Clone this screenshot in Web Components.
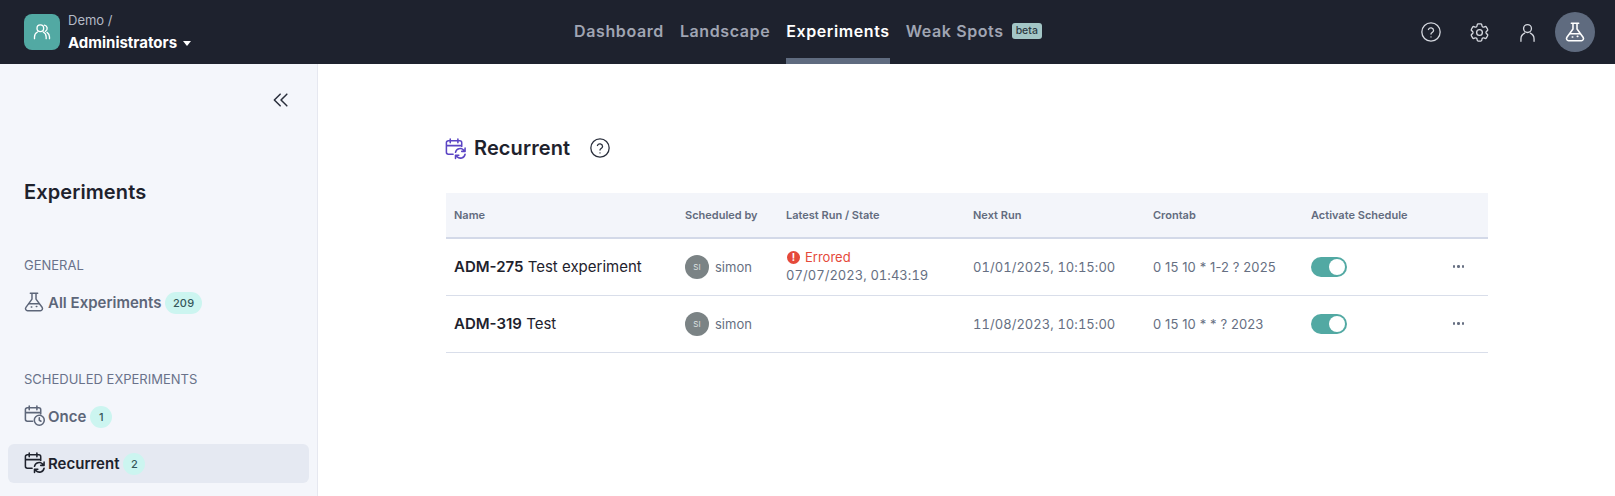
<!DOCTYPE html>
<html>
<head>
<meta charset="utf-8">
<title>Recurrent</title>
<style>
  html, body { margin: 0; height: 100%; background: #fff; }
  body { font-family: Inter, "Liberation Sans", sans-serif; color: #1e222d; overflow: hidden; }
</style>
</head>
<body>
<app-shell>
  <app-header slot="header"></app-header>
  <side-bar slot="side">
    <side-section label="General">
      <side-item icon="flask" count="209">All Experiments</side-item>
    </side-section>
    <side-section label="Scheduled Experiments">
      <side-item icon="once" count="1">Once</side-item>
      <side-item icon="recur" count="2" active>Recurrent</side-item>
    </side-section>
  </side-bar>
  <recurrent-page>
    <exp-table>
      <exp-row code="ADM-275" name="Test experiment" user="simon" errored="07/07/2023, 01:43:19" next="01/01/2025, 10:15:00" cron="0 15 10 * 1-2 ? 2025"></exp-row>
      <exp-row code="ADM-319" name="Test" user="simon" next="11/08/2023, 10:15:00" cron="0 15 10 * * ? 2023"></exp-row>
    </exp-table>
  </recurrent-page>
</app-shell>

<script>
const ICONS = {
  flask: '<path d="M8 2.500h8M9.800 2.500v6.300L3.200 17.800A2.300 2.300 0 0 0 5 21.500h14a2.300 2.300 0 0 0 1.800-3.700L14.200 8.800V2.500"/><path d="M6.300 14h11.400"/><path d="M9 17.500h.6M14.500 16.800h.6"/>',
  once: '<path d="M10 18H4.500a2 2 0 0 1-2-2V6a2 2 0 0 1 2-2h12a2 2 0 0 1 2 2v4.500M2.500 9h16M6.500 2v4M14.500 2v4"/><circle cx="17" cy="17" r="5.200"/><path d="M17 14.300V17l1.800 1"/>',
  recur: '<path d="M9.500 18h-5a2 2 0 0 1-2-2V6a2 2 0 0 1 2-2h12a2 2 0 0 1 2 2v4M2.500 9h16M6.500 2v4M14.500 2v4"/><path d="M12 16a5 5 0 0 1 8.500-2.500l1.500 1.500M22 11.500V15h-3.500M22 18a5 5 0 0 1-8.500 2.500L12 19M12 22.500V19h3.500"/>',
  help: '<circle cx="12" cy="12" r="10"/><path d="M9.200 9.300a2.900 2.900 0 0 1 5.600 1c0 1.900-2.800 2.400-2.800 3.900"/><path d="M12 17.300v.1"/>',
  gear: '<path d="M9.594 3.940c.09-.542.56-.94 1.110-.94h2.593c.55 0 1.020.398 1.110.94l.213 1.281c.063.374.313.686.645.87.074.04.147.083.22.127.325.196.72.257 1.075.124l1.217-.456a1.125 1.125 0 0 1 1.370.49l1.296 2.247a1.125 1.125 0 0 1-.26 1.431l-1.003.827c-.293.241-.438.613-.43.992a7.723 7.723 0 0 1 0 .255c-.008.378.137.75.43.991l1.004.827c.424.35.534.955.26 1.430l-1.298 2.247a1.125 1.125 0 0 1-1.369.491l-1.217-.456c-.355-.133-.75-.072-1.076.124a6.470 6.470 0 0 1-.22.128c-.331.183-.581.495-.644.869l-.213 1.281c-.09.543-.56.94-1.110.94h-2.594c-.55 0-1.019-.398-1.110-.94l-.213-1.281c-.062-.374-.312-.686-.644-.87a6.520 6.520 0 0 1-.22-.127c-.325-.196-.72-.257-1.076-.124l-1.217.456a1.125 1.125 0 0 1-1.369-.49l-1.297-2.247a1.125 1.125 0 0 1 .26-1.431l1.004-.827c.292-.24.437-.613.43-.991a6.932 6.932 0 0 1 0-.255c.007-.38-.138-.751-.43-.992l-1.004-.827a1.125 1.125 0 0 1-.26-1.430l1.297-2.247a1.125 1.125 0 0 1 1.370-.491l1.216.456c.356.133.751.072 1.076-.124.072-.044.146-.086.22-.128.332-.183.582-.495.644-.869l.214-1.280Z"/><circle cx="12" cy="12" r="3"/>',
  person: '<circle cx="12" cy="7.500" r="4.500"/><path d="M4.500 22v-2.500a7.500 7.500 0 0 1 4.200-6.800M19.500 22v-2.500a7.500 7.500 0 0 0-4.200-6.800"/>',
  group: '<circle cx="10" cy="7.500" r="4"/><path d="M3 20v-2a7 7 0 0 1 3.500-6M17 20v-2a7 7 0 0 0-3.500-6"/><path d="M15 3.700a4 4 0 0 1 1 7.500M21 20v-2a7 7 0 0 0-3-5.500"/>',
  collapse: '<path d="M11 5l-7 7 7 7M19 5l-7 7 7 7"/>'
};

function svg(name, size, stroke, width) {
  return `<svg xmlns="http://www.w3.org/2000/svg" width="${size}" height="${size}" viewBox="0 0 24 24" fill="none" stroke="${stroke}" stroke-width="${width}" stroke-linecap="round" stroke-linejoin="round">${ICONS[name]}</svg>`;
}

class AppShell extends HTMLElement {
  constructor(){
    super();
    this.attachShadow({ mode: 'open' });
  }
  connectedCallback() {
    this.shadowRoot.innerHTML = `
      <style>
        :host { display: grid; grid-template-rows: 64px 1fr; height: 496px; }
        .body { display: grid; grid-template-columns: 318px 1fr; min-height: 0; }
      </style>
      <slot name="header"></slot>
      <div class="body">
        <slot name="side"></slot>
        <slot></slot>
      </div>
    `;
  }
}

class AppHeader extends HTMLElement {
  constructor(){
    super();
    this.attachShadow({ mode: 'open' });
  }
  connectedCallback() {
    this.shadowRoot.innerHTML = `
      <style>
        :host {
          display: grid;
          grid-template-columns: 1fr auto 1fr;
          height: 64px;
          background: #1e222e;
          color: #fff;
          padding: 0 20px 0 24px;
          box-sizing: border-box;
        }
        .org { display: flex; align-items: center; gap: 8px; }
        .tile {
          width: 36px; height: 36px; border-radius: 8px; background: #52a9a3;
          display: flex; align-items: center; justify-content: center;
        }
        .org-text { display: flex; flex-direction: column; gap: 6px; }
        .demo { font-size: 13px; line-height: 16px; color: #b4bac6; }
        .admin { font-size: 15px; line-height: 18px; font-weight: 700; display: flex; align-items: center; gap: 6px; }
        .caret { width: 0; height: 0; border: 4.500px solid transparent; border-top: 5px solid #fff; border-bottom: 0; }
        nav { display: flex; gap: 16px; padding-right: 3px; }
        a {
          display: flex; align-items: center; gap: 8px;
          height: 64px; box-sizing: border-box; padding-top: 4px;
          font-size: 16px; font-weight: 600; color: #a0a5b3; letter-spacing: .6px;
          border-bottom: 6px solid transparent;
        }
        a.on { color: #fff; border-bottom-color: #5f6b7f; }
        .beta {
          font-size: 10.500px; line-height: 16px; font-weight: 500; padding: 0 4px;
          background: #a3c6c6; color: #2d3a42; border-radius: 3px; letter-spacing: 0;
        }
        .tools { display: flex; align-items: center; justify-content: flex-end; }
        .tool { width: 48px; display: flex; justify-content: center; }
        .avatar {
          width: 40px; height: 40px; border-radius: 50%; background: #5f6b7f; margin-left: 4px;
          display: flex; align-items: center; justify-content: center;
        }
      </style>
      <div class="org">
        <div class="tile">${svg('group', 20, '#fff', 1.6)}</div>
        <div class="org-text">
          <div class="demo">Demo /</div>
          <div class="admin">Administrators <span class="caret"></span></div>
        </div>
      </div>
      <nav>
        <a>Dashboard</a>
        <a>Landscape</a>
        <a class="on">Experiments</a>
        <a>Weak Spots <span class="beta">beta</span></a>
      </nav>
      <div class="tools">
        <div class="tool">${svg('help', 22, '#d5d8df', 1.4)}</div>
        <div class="tool">${svg('gear', 23, '#d5d8df', 1.4)}</div>
        <div class="tool">${svg('person', 21, '#d5d8df', 1.5)}</div>
        <div class="avatar">${svg('flask', 22, '#fff', 1.7)}</div>
      </div>
    `;
  }
}

class SideBar extends HTMLElement {
  constructor(){
    super();
    this.attachShadow({ mode: 'open' });
  }
  connectedCallback() {
    this.shadowRoot.innerHTML = `
      <style>
        :host {
          display: flex; flex-direction: column;
          background: #f4f6fb; border-right: 1px solid #e6e8f0;
          box-sizing: border-box; height: 432px; padding: 0 8px;
        }
        .collapse { display: flex; justify-content: flex-end; padding: 26px 18px 0 0; height: 23px; }
        h2 { font-size: 20px; line-height: 28px; font-weight: 600; letter-spacing: .1px; margin: 68px 0 51px 16px; color: #1e222d; }
      </style>
      <div class="collapse">${svg('collapse', 20, '#2a2f3c', 1.8)}</div>
      <h2>Experiments</h2>
      <slot></slot>
    `;
  }
}

class SideSection extends HTMLElement {
  constructor(){
    super();
    this.attachShadow({ mode: 'open' });
  }
  connectedCallback() {
    this.shadowRoot.innerHTML = `
      <style>
        :host { display: flex; flex-direction: column; gap: 8px; margin-bottom: 49px; }
        .label {
          font-size: 13px; line-height: 16px; color: #69728a; text-transform: uppercase;
          margin: 0 0 2px 16px;
        }
      </style>
      <div class="label">${this.getAttribute('label')}</div>
      <slot></slot>
    `;
  }
}

class SideItem extends HTMLElement {
  constructor(){
    super();
    this.attachShadow({ mode: 'open' });
  }
  connectedCallback() {
    const active = this.hasAttribute('active');
    const color = active ? '#1e222d' : '#5d6679';
    const size = this.getAttribute('icon') === 'flask' ? 22 : 23;
    this.shadowRoot.innerHTML = `
      <style>
        :host {
          display: flex; align-items: center; gap: 4px;
          height: 39px; padding: 0 16px; border-radius: 6px;
          font-size: 15px; font-weight: 600;
          color: ${color};
          background: ${active ? '#e5e9f2' : 'transparent'};
        }
        .ico { flex: none; width: 20px; display: flex; justify-content: center; margin-top: -2px; }
        svg { flex: none; }
      </style>
      <span class="ico">${svg(this.getAttribute('icon'), size, color, 1.6)}</span>
      <slot></slot>
      <count-badge>${this.getAttribute('count')}</count-badge>
    `;
  }
}

class CountBadge extends HTMLElement {
  constructor(){
    super();
    this.attachShadow({ mode: 'open' });
  }
  connectedCallback() {
    this.shadowRoot.innerHTML = `
      <style>
        :host {
          display: inline-flex; align-items: center; justify-content: center;
          min-width: 22px; height: 22px; padding: 0 7.500px; box-sizing: border-box;
          background: #ccf5f0; color: #35575a; border-radius: 11px;
          font-size: 11px; font-weight: 500; letter-spacing: .2px;
        }
      </style>
      <slot></slot>
    `;
  }
}

class RecurrentPage extends HTMLElement {
  constructor(){
    super();
    this.attachShadow({ mode: 'open' });
  }
  connectedCallback() {
    this.shadowRoot.innerHTML = `
      <style>
        :host { display: block; padding: 69px 127px 0 128px; background: #fff; }
        header { display: flex; align-items: center; height: 30px; margin-bottom: 30px; }
        h1 { font-size: 20px; font-weight: 600; line-height: 30px; margin: 0 0 0 7px; letter-spacing: .1px; color: #1e222d; }
        .help { margin-left: 19px; display: flex; }
        .ico { display: flex; margin-left: -2px; }
      </style>
      <header>
        <span class="ico">${svg('recur', 23, '#5b45c4', 1.6)}</span>
        <h1>Recurrent</h1>
        <span class="help">${svg('help', 22, '#2a2f3c', 1.4)}</span>
      </header>
      <slot></slot>
    `;
  }
}

const COLS = '231px 101px 187px 180px 158px 1fr';

class ExpTable extends HTMLElement {
  constructor(){
    super();
    this.attachShadow({ mode: 'open' });
  }
  connectedCallback() {
    this.shadowRoot.innerHTML = `
      <style>
        :host { display: block; }
        .head {
          display: grid; grid-template-columns: ${COLS};
          height: 46px; box-sizing: border-box; align-items: center;
          background: #f3f5fa; border-bottom: 2px solid #d3d9e8;
          font-size: 11px; font-weight: 600; color: #626b7e;
        }
        .head div { padding-left: 8px; }
      </style>
      <div class="head">
        <div>Name</div><div>Scheduled by</div><div>Latest Run / State</div>
        <div>Next Run</div><div>Crontab</div><div>Activate Schedule</div>
      </div>
      <slot></slot>
    `;
  }
}

class ExpRow extends HTMLElement {
  constructor(){
    super();
    this.attachShadow({ mode: 'open' });
  }
  connectedCallback() {
    const a = (n) => this.getAttribute(n);
    const err = a('errored');
    this.shadowRoot.innerHTML = `
      <style>
        :host {
          display: grid; grid-template-columns: ${COLS};
          height: 57px; box-sizing: border-box; align-items: center; padding-bottom: 1px;
          border-bottom: 1px solid #d9deea;
          font-size: 13px; color: #666f82;
        }
        .cell { padding-left: 8px; }
        .name { font-size: 15px; color: #1e222d; }
        b { font-weight: 600; }
        .user { display: flex; align-items: center; gap: 6px; }
        .si {
          width: 24px; height: 24px; border-radius: 50%; background: #7b8385; color: #dfe2e2;
          font-size: 8px; display: flex; align-items: center; justify-content: center;
        }
        .state { color: #e5493a; display: flex; align-items: center; gap: 5px; line-height: 18px; }
        .dot {
          width: 13px; height: 13px; border-radius: 50%; background: #e5493a; margin-left: 1px; color: #fff;
          font-size: 10px; font-weight: 700; line-height: 13px; text-align: center;
        }
        .when { line-height: 19px; letter-spacing: .05px; font-variant-numeric: tabular-nums; }
        .date { letter-spacing: .05px; font-variant-numeric: tabular-nums; }
        .cron { letter-spacing: .1px; }
        .last { display: flex; justify-content: space-between; align-items: center; padding-right: 20px; }
        .more { display: flex; gap: 2px; margin-right: 4px; }
        .more i { width: 2.500px; height: 2.500px; border-radius: 50%; background: #666f82; }
      </style>
      <div class="cell name"><b>${a('code')}</b> ${a('name')}</div>
      <div class="cell user"><span class="si">SI</span>${a('user')}</div>
      <div class="cell">
        ${err ? `<div class="state"><span class="dot">!</span>Errored</div><div class="when">${err}</div>` : ''}
      </div>
      <div class="cell date">${a('next')}</div>
      <div class="cell cron">${a('cron')}</div>
      <div class="cell last"><toggle-switch></toggle-switch><div class="more"><i></i><i></i><i></i></div></div>
    `;
  }
}

class ToggleSwitch extends HTMLElement {
  constructor(){
    super();
    this.attachShadow({ mode: 'open' });
  }
  connectedCallback() {
    this.shadowRoot.innerHTML = `
      <style>
        :host {
          display: flex; justify-content: flex-end; align-items: center;
          width: 36px; height: 20px; box-sizing: border-box; padding: 2px;
          border-radius: 10px; background: #52a9a3;
        }
        i { width: 16px; height: 16px; border-radius: 50%; background: #fff; }
      </style>
      <i></i>
    `;
  }
}

customElements.define('app-shell', AppShell);
customElements.define('app-header', AppHeader);
customElements.define('side-bar', SideBar);
customElements.define('side-section', SideSection);
customElements.define('side-item', SideItem);
customElements.define('count-badge', CountBadge);
customElements.define('recurrent-page', RecurrentPage);
customElements.define('exp-table', ExpTable);
customElements.define('exp-row', ExpRow);
customElements.define('toggle-switch', ToggleSwitch);
</script>
</body>
</html>
